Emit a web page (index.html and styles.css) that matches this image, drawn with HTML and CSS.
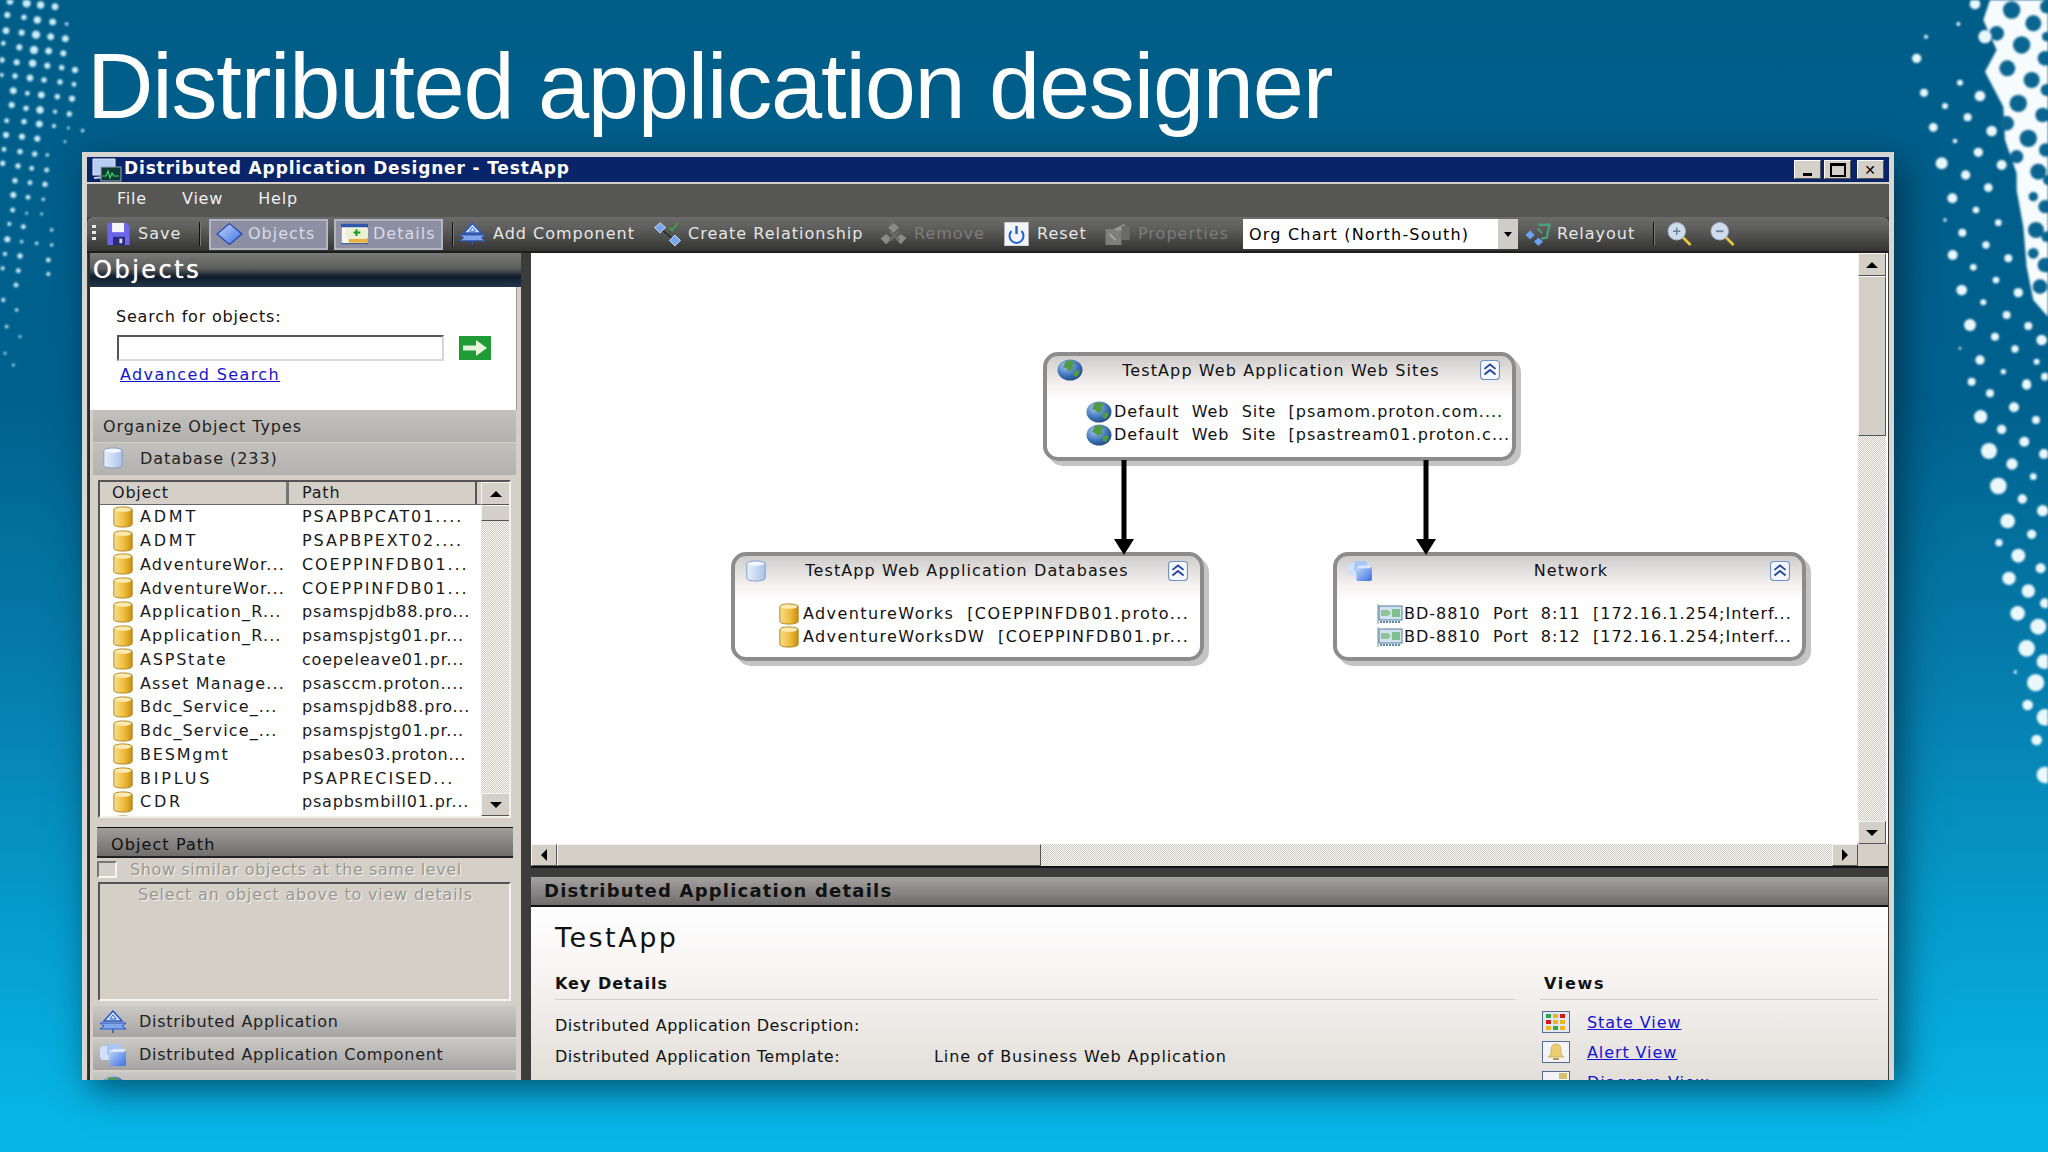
FILE: index.html
```html
<!DOCTYPE html>
<html lang="en">
<head>
    <meta charset="UTF-8">
    <meta name="viewport" content="width=device-width, initial-scale=1.0">
    <title>Distributed application designer</title>
    <link rel="stylesheet" href="styles.css">
</head>
<body>
    <svg class="icon-defs" width="0" height="0">
        <defs>
            <linearGradient id="gold" x1="0" x2="1" y1="0" y2="0"><stop offset="0" stop-color="#f7dc8c"/><stop offset=".55" stop-color="#f0bd3c"/><stop offset="1" stop-color="#c98f14"/></linearGradient>
            <linearGradient id="pale" x1="0" x2="1" y1="0" y2="0"><stop offset="0" stop-color="#e8f0fb"/><stop offset="1" stop-color="#a9c3ea"/></linearGradient>
            <linearGradient id="blue" x1="0" x2="1" y1="0" y2="1"><stop offset="0" stop-color="#c4dafa"/><stop offset="1" stop-color="#3b6fe0"/></linearGradient>
            <radialGradient id="earth" cx=".35" cy=".3" r=".8"><stop offset="0" stop-color="#a8c8ee"/><stop offset=".6" stop-color="#3c72b8"/><stop offset="1" stop-color="#1d4378"/></radialGradient>
            <symbol id="db" viewBox="0 0 22 24"><path d="M1 4c0-4 20-4 20 0v16c0 4-20 4-20 0z" fill="url(#gold)" stroke="#a8801c"/><ellipse cx="11" cy="4" rx="9" ry="2.4" fill="#fbeab0"/></symbol>
            <symbol id="db-pale" viewBox="0 0 22 24"><path d="M1 4c0-4 20-4 20 0v16c0 4-20 4-20 0z" fill="url(#pale)" stroke="#7f9cc8"/><ellipse cx="11" cy="4" rx="9" ry="2.2" fill="#f4f8fe"/></symbol>
            <symbol id="globe" viewBox="0 0 26 22"><ellipse cx="13" cy="11" rx="12.5" ry="10.5" fill="url(#earth)"/><path d="M9 2c4-1 8 0 9 2l-3 2 2 3-5 3-3-3-3-1zM16 13l5-2 2 2-3 5-3-1z" fill="#4f9b45"/></symbol>
            <symbol id="cubes" viewBox="0 0 28 24"><rect x="1" y="3" width="17" height="14" rx="4" fill="#cfe0fa"/><rect x="8" y="1" width="14" height="12" rx="3" fill="#a9c6f4"/><rect x="10" y="7" width="17" height="16" rx="2" fill="url(#blue)"/><path d="M10 9l4-3h13l-2 3z" fill="#dbe8fc"/></symbol>
            <symbol id="nic" viewBox="0 0 26 22"><path d="M1 1v20" stroke="#7c93ae" stroke-width="1"/><rect x="2" y="3" width="23" height="14" fill="#d2e2ee" stroke="#4d7ea0"/><path d="M4 7h7l3 3-3 3H4z" fill="#8fc49a"/><path d="M15 6h8v8h-8z" fill="#7fbf90"/><path d="M3 19h21" stroke="#5f88a8" stroke-width="2" stroke-dasharray="2 1"/></symbol>
            <symbol id="save" viewBox="0 0 26 26"><path d="M1 1h21l3 3v21H1z" fill="#6a68e8"/><rect x="6" y="1" width="13" height="10" fill="#f4f4fb"/><rect x="7" y="16" width="13" height="9" fill="#2d2a7c"/><rect x="14" y="18" width="3" height="5" fill="#d8d8ef"/></symbol>
            <symbol id="diamond" viewBox="0 0 26 22"><path d="M13 1l12 10-12 10L1 11z" fill="url(#blue)" stroke="#2747b0" stroke-width="1.2"/></symbol>
            <symbol id="details" viewBox="0 0 28 22"><rect x="0" y="1" width="28" height="20" fill="#f7f7f4" stroke="#274a90"/><rect x="0" y="1" width="28" height="3" fill="#2a55a8"/><rect x="5" y="5" width="23" height="10" fill="#e9f1d2"/><rect x="8" y="16" width="20" height="4" fill="#e8b23f"/><path d="M16 6v7M13 9.500h7" stroke="#0f9a1e" stroke-width="2"/></symbol>
            <symbol id="dist-app" viewBox="0 0 28 24"><path d="M14 1l9 10H5z" fill="#cfe2fb" stroke="#2b59c8" stroke-width="1.500"/><path d="M11 9h6l-3-4z" fill="#f2f7ff" stroke="#2b59c8"/><path d="M1 13h26l-4 3 4 3H1l4-3z" fill="#7fa8ec" stroke="#2b59c8"/><path d="M14 19v4" stroke="#2b59c8" stroke-width="1.500"/></symbol>
            <symbol id="relate" viewBox="0 0 28 26"><path d="M6 7l16 13" stroke="#222" stroke-width="1.500"/><path d="M6 1l6 5-6 6-6-6zM22 14l6 6-6 6-6-6z" fill="#78a8ec" stroke="#cfe0fa"/><path d="M16 6l3 3 6-8" fill="none" stroke="#3ea04a" stroke-width="2"/></symbol>
            <symbol id="remove" viewBox="0 0 28 26"><path d="M14 1l6 5-6 6-6-6zM6 13l6 5-6 6-6-6zM22 13l6 4-6 7-6-6z" fill="#8a8a88"/><path d="M10 10l10 10M20 10L10 20" stroke="#6a6a68" stroke-width="3"/></symbol>
            <symbol id="reset" viewBox="0 0 24 24"><rect x="0" y="0" width="24" height="24" fill="#f2f5fc" stroke="#b6b6b6"/><path d="M7 9a7 7 0 1 0 10 0" fill="none" stroke="#2060d0" stroke-width="2"/><path d="M12 4v8" stroke="#2060d0" stroke-width="2.400"/></symbol>
            <symbol id="props" viewBox="0 0 26 24"><path d="M1 7h16v16H1z" fill="#7e7e7c"/><path d="M9 7l11-5v6l-6 1z" fill="#9a9a98"/><path d="M17 4h8v14h-8z" fill="#6b6b69"/><path d="M5 12l6 6" stroke="#a4a4a2" stroke-width="2"/></symbol>
            <symbol id="relayout" viewBox="0 0 28 26"><path d="M6 9l5 5-5 5-5-5zM15 17l5 4-5 5-5-5z" fill="#6aa0ee"/><path d="M15 3h12l-3 14-6 1" fill="none" stroke="#4aa078" stroke-width="2.500"/><path d="M14 7l5 5" stroke="#4aa078" stroke-width="2"/></symbol>
            <symbol id="zoom-in" viewBox="0 0 28 26"><path d="M17 16l9 9" stroke="#e8c440" stroke-width="3"/><circle cx="11" cy="10" r="9.500" fill="#cfdcec" stroke="#9db0c8"/><path d="M11 6v8M7 10h8" stroke="#6a7c96" stroke-width="1.500"/></symbol>
            <symbol id="zoom-out" viewBox="0 0 28 26"><path d="M17 16l9 9" stroke="#e8c440" stroke-width="3"/><circle cx="11" cy="10" r="9.500" fill="#cfdcec" stroke="#9db0c8"/><path d="M7 10h8" stroke="#6a7c96" stroke-width="2"/></symbol>
            <symbol id="monitor" viewBox="0 0 30 24"><rect x="1" y="1" width="22" height="16" fill="#b7cdf2" stroke="#dfe8f8"/><path d="M2 20l24-2" stroke="#c8d0dc" stroke-width="2"/><rect x="9" y="9" width="20" height="14" fill="#0e3a36" stroke="#98a8b0"/><path d="M10 18h4l2-5 2 7 2-5 2 3h5" fill="none" stroke="#42d860" stroke-width="1.200"/></symbol>
            <symbol id="chevrons" viewBox="0 0 18 18"><rect x=".5" y=".5" width="17" height="17" rx="3" fill="#f4f8fd" stroke="#6f92c4"/><path d="M4 8l5-4 5 4M4 13l5-4 5 4" fill="none" stroke="#23449a" stroke-width="1.600"/></symbol>
            <symbol id="state" viewBox="0 0 28 22"><rect x=".5" y=".5" width="27" height="21" fill="#e2e8f4" stroke="#5a6a8a"/><g fill="#2fa64a"><rect x="4" y="3" width="5" height="4"/></g><rect x="11" y="3" width="5" height="4" fill="#e9b820"/><rect x="18" y="3" width="5" height="4" fill="#d81818"/><rect x="4" y="9" width="5" height="4" fill="#d81818"/><rect x="11" y="9" width="5" height="4" fill="#e9b820"/><rect x="18" y="9" width="5" height="4" fill="#e9b820"/><rect x="4" y="15" width="5" height="4" fill="#e9b820"/><rect x="11" y="15" width="5" height="4" fill="#2fa64a"/><rect x="18" y="15" width="5" height="4" fill="#e9b820"/></symbol>
            <symbol id="bell" viewBox="0 0 28 22"><rect x=".5" y=".5" width="27" height="21" fill="#f2f4fa" stroke="#5a6a8a"/><path d="M14 3c-5 0-5 4-5 8 0 3-2 4-3 5h16c-1-1-3-2-3-5 0-4 0-8-5-8z" fill="#eccf72" stroke="#b89a40" stroke-width=".6"/><rect x="11" y="17" width="6" height="2" fill="#b89a40"/></symbol>
            <symbol id="diagram" viewBox="0 0 28 22"><rect x=".5" y=".5" width="27" height="21" fill="#f2f4fa" stroke="#5a6a8a"/><rect x="17" y="2" width="8" height="6" fill="#d8c070"/></symbol>
        </defs>
    </svg>

    <!-- halftone dots of the slide template -->
    <svg class="halftone" viewBox="0 0 2048 1152" width="2048" height="1152">
        <g transform="scale(.3333)" fill="#cdeef8" stroke="#cdeef8" stroke-width="3">
            <circle cx="30" cy="4" r="9"/><circle cx="80" cy="10" r="11"/><circle cx="122" cy="15" r="10"/><circle cx="165" cy="20" r="9"/>
            <circle cx="22" cy="45" r="8"/><circle cx="72" cy="52" r="7"/><circle cx="112" cy="60" r="10"/><circle cx="158" cy="66" r="9"/><circle cx="200" cy="72" r="4"/>
            <circle cx="18" cy="92" r="9"/><circle cx="65" cy="98" r="8"/><circle cx="108" cy="104" r="11"/><circle cx="152" cy="110" r="9"/><circle cx="196" cy="116" r="9"/>
            <circle cx="10" cy="130" r="6"/><circle cx="58" cy="142" r="8"/><circle cx="102" cy="150" r="11"/><circle cx="146" cy="153" r="9"/><circle cx="190" cy="160" r="8"/>
            <circle cx="6" cy="180" r="7"/><circle cx="50" cy="187" r="8"/><circle cx="98" cy="190" r="10"/><circle cx="142" cy="197" r="8"/><circle cx="185" cy="203" r="7"/><circle cx="225" cy="210" r="8"/>
            <circle cx="5" cy="225" r="5"/><circle cx="45" cy="228" r="7"/><circle cx="90" cy="234" r="9"/><circle cx="132" cy="240" r="7"/><circle cx="180" cy="246" r="7"/><circle cx="222" cy="253" r="6"/>
            <circle cx="40" cy="272" r="9"/><circle cx="82" cy="280" r="6"/><circle cx="124" cy="285" r="9"/><circle cx="172" cy="290" r="7"/><circle cx="216" cy="296" r="8"/>
            <circle cx="35" cy="315" r="8"/><circle cx="78" cy="325" r="7"/><circle cx="120" cy="330" r="10"/><circle cx="165" cy="335" r="5"/><circle cx="208" cy="342" r="7"/>
            <circle cx="20" cy="362" r="6"/><circle cx="72" cy="365" r="7"/><circle cx="118" cy="372" r="9"/><circle cx="162" cy="378" r="5"/><circle cx="205" cy="384" r="3"/><circle cx="248" cy="392" r="4"/>
            <circle cx="18" cy="405" r="8"/><circle cx="66" cy="410" r="8"/><circle cx="112" cy="416" r="8"/><circle cx="195" cy="425" r="3"/>
            <circle cx="12" cy="448" r="6"/><circle cx="60" cy="455" r="7"/><circle cx="104" cy="462" r="7"/><circle cx="142" cy="465" r="4"/>
            <circle cx="8" cy="490" r="7"/><circle cx="54" cy="498" r="7"/><circle cx="95" cy="505" r="6"/><circle cx="140" cy="510" r="6"/>
            <circle cx="45" cy="542" r="7"/><circle cx="90" cy="548" r="6"/><circle cx="135" cy="553" r="7"/>
            <circle cx="40" cy="585" r="8"/><circle cx="84" cy="592" r="6"/><circle cx="130" cy="598" r="4"/>
            <circle cx="38" cy="630" r="6"/><circle cx="80" cy="640" r="3"/><circle cx="125" cy="642" r="3"/>
            <circle cx="28" cy="672" r="5"/><circle cx="70" cy="680" r="6"/><circle cx="155" cy="690" r="4"/>
            <circle cx="22" cy="718" r="8"/><circle cx="65" cy="725" r="4"/><circle cx="110" cy="730" r="4"/><circle cx="155" cy="735" r="4"/>
            <circle cx="15" cy="762" r="5"/><circle cx="60" cy="768" r="7"/><circle cx="145" cy="780" r="6"/>
            <circle cx="8" cy="805" r="5"/><circle cx="55" cy="812" r="6"/><circle cx="145" cy="822" r="5"/><circle cx="48" cy="855" r="6"/>
            <circle cx="10" cy="900" r="5"/><circle cx="50" cy="930" r="4"/><circle cx="20" cy="980" r="4"/><circle cx="60" cy="1010" r="3"/><circle cx="15" cy="1060" r="3"/><circle cx="40" cy="1095" r="3"/>
        </g>
        <g transform="translate(1800 0) scale(.3333)" fill="#eaf8fc">
            <path d="M570 0L550 60 590 150 555 215 610 320 615 420 650 520 650 570 670 680 680 800 700 900 744 950V0z" fill="#f6fbfd"/>
            <g fill="#0a6590">
                <circle cx="635" cy="30" r="26"/><circle cx="700" cy="70" r="24"/><circle cx="665" cy="135" r="26"/><circle cx="735" cy="175" r="22"/><circle cx="622" cy="205" r="24"/><circle cx="695" cy="240" r="24"/><circle cx="655" cy="310" r="26"/><circle cx="728" cy="345" r="22"/><circle cx="685" cy="415" r="26"/><circle cx="737" cy="450" r="20"/><circle cx="650" cy="470" r="20"/><circle cx="715" cy="515" r="24"/><circle cx="735" cy="620" r="20"/><circle cx="708" cy="690" r="24"/><circle cx="735" cy="795" r="22"/><circle cx="700" cy="590" r="14"/><circle cx="590" cy="100" r="22"/><circle cx="620" cy="370" r="22"/><circle cx="740" cy="20" r="20"/><circle cx="740" cy="110" r="14"/><circle cx="740" cy="270" r="18"/><circle cx="745" cy="540" r="16"/><circle cx="740" cy="710" r="16"/><circle cx="700" cy="760" r="16"/><circle cx="720" cy="860" r="22"/>
            </g>
            <circle cx="525" cy="12" r="16"/><circle cx="475" cy="72" r="6"/><circle cx="378" cy="110" r="6"/><circle cx="350" cy="175" r="14"/><circle cx="480" cy="248" r="9"/><circle cx="372" cy="278" r="12"/><circle cx="540" cy="288" r="16"/><circle cx="435" cy="318" r="9"/><circle cx="503" cy="352" r="12"/><circle cx="400" cy="382" r="13"/><circle cx="555" cy="110" r="20"/><circle cx="575" cy="393" r="16"/><circle cx="465" cy="423" r="7"/><circle cx="535" cy="457" r="14"/><circle cx="425" cy="490" r="18"/><circle cx="605" cy="495" r="15"/><circle cx="497" cy="525" r="14"/><circle cx="565" cy="563" r="13"/><circle cx="457" cy="595" r="15"/><circle cx="528" cy="630" r="10"/><circle cx="435" cy="660" r="5"/><circle cx="595" cy="668" r="10"/><circle cx="487" cy="698" r="12"/><circle cx="558" cy="735" r="11"/><circle cx="458" cy="765" r="15"/><circle cx="625" cy="775" r="12"/><circle cx="520" cy="802" r="10"/><circle cx="588" cy="840" r="10"/><circle cx="485" cy="870" r="16"/><circle cx="655" cy="878" r="14"/><circle cx="550" cy="907" r="9"/><circle cx="620" cy="945" r="12"/><circle cx="510" cy="975" r="18"/><circle cx="685" cy="978" r="12"/><circle cx="585" cy="1010" r="12"/><circle cx="480" cy="1045" r="4"/><circle cx="645" cy="1047" r="11"/><circle cx="710" cy="1085" r="9"/><circle cx="540" cy="1080" r="14"/><circle cx="610" cy="1115" r="8"/><circle cx="515" cy="1145" r="12"/><circle cx="680" cy="1150" r="12"/><circle cx="570" cy="1180" r="12"/><circle cx="725" cy="1020" r="16"/><circle cx="735" cy="1130" r="12"/>
        </g>
        <g transform="translate(1890 380) scale(.3333)" fill="#eaf8fc">
            <circle cx="372" cy="82" r="15"/><circle cx="410" cy="15" r="14"/><circle cx="272" cy="110" r="20"/><circle cx="335" cy="148" r="14"/><circle cx="403" cy="185" r="15"/><circle cx="438" cy="120" r="12"/><circle cx="297" cy="213" r="24"/><circle cx="366" cy="252" r="17"/><circle cx="462" cy="222" r="15"/><circle cx="430" cy="290" r="10"/><circle cx="325" cy="318" r="25"/><circle cx="397" cy="357" r="14"/><circle cx="458" cy="392" r="17"/><circle cx="353" cy="423" r="22"/><circle cx="425" cy="463" r="14"/><circle cx="327" cy="488" r="11"/><circle cx="385" cy="527" r="21"/><circle cx="452" cy="565" r="15"/><circle cx="357" cy="595" r="20"/><circle cx="415" cy="633" r="20"/><circle cx="465" cy="670" r="15"/><circle cx="383" cy="700" r="22"/><circle cx="445" cy="740" r="24"/><circle cx="410" cy="805" r="25"/><circle cx="462" cy="845" r="22"/><circle cx="376" cy="876" r="5"/><circle cx="437" cy="908" r="26"/><circle cx="413" cy="975" r="16"/><circle cx="465" cy="1012" r="25"/><circle cx="440" cy="1080" r="16"/><circle cx="465" cy="1185" r="25"/>
        </g>
    </svg>

    <div class="slide">
        <h1 class="slide-title">Distributed application designer</h1>

        <div class="window">
            <div class="titlebar">
                <svg class="ico ico-monitor"><use href="#monitor"/></svg>
                <span class="titlebar-text">Distributed Application Designer - TestApp</span>
                <div class="win-buttons">
                    <div class="win-btn"><span class="glyph-min"></span></div>
                    <div class="win-btn"><span class="glyph-max"></span></div>
                    <div class="win-btn win-close">✕</div>
                </div>
            </div>

            <div class="menubar">
                <span>File</span>
                <span>View</span>
                <span>Help</span>
            </div>

            <div class="toolbar">
                <div class="grip"></div>
                <div class="tool tool-save"><svg class="ico"><use href="#save"/></svg><span class="tool-text">Save</span></div>
                <div class="tool-sep"></div>
                <div class="tool tool-toggle tool-objects"><svg class="ico"><use href="#diamond"/></svg><span class="tool-text">Objects</span></div>
                <div class="tool tool-toggle tool-details"><svg class="ico"><use href="#details"/></svg><span class="tool-text">Details</span></div>
                <div class="tool-sep"></div>
                <div class="tool tool-add"><svg class="ico"><use href="#dist-app"/></svg><span class="tool-text">Add Component</span></div>
                <div class="tool tool-create"><svg class="ico"><use href="#relate"/></svg><span class="tool-text">Create Relationship</span></div>
                <div class="tool tool-off tool-remove"><svg class="ico"><use href="#remove"/></svg><span class="tool-text">Remove</span></div>
                <div class="tool tool-reset"><svg class="ico"><use href="#reset"/></svg><span class="tool-text">Reset</span></div>
                <div class="tool tool-off tool-props"><svg class="ico"><use href="#props"/></svg><span class="tool-text">Properties</span></div>
                <div class="combo">
                    <span class="combo-text">Org Chart (North-South)</span>
                    <span class="combo-btn"></span>
                </div>
                <div class="tool tool-relayout"><svg class="ico"><use href="#relayout"/></svg><span class="tool-text">Relayout</span></div>
                <div class="tool-sep tool-sep-last"></div>
                <div class="tool tool-zoom"><svg class="ico"><use href="#zoom-in"/></svg></div>
                <div class="tool tool-zoom"><svg class="ico"><use href="#zoom-out"/></svg></div>
            </div>

            <div class="main">
                <div class="left-panel">
                    <div class="objects-head">Objects</div>
                    <div class="search-box">
                        <div class="search-label">Search for objects:</div>
                        <div class="search-row">
                            <div class="search-input"></div>
                            <div class="go-btn">
                                <svg viewBox="0 0 32 24" width="32" height="24"><rect width="32" height="24" fill="#1f9c35"/><path d="M4 9.500h13V4l11 8-11 8v-5.500H4z" fill="#e4f4dc"/></svg>
                            </div>
                        </div>
                        <a class="link search-link">Advanced Search</a>
                    </div>

                    <div class="band band-flat">Organize Object Types</div>
                    <div class="band band-flat band-db"><svg class="ico"><use href="#db-pale"/></svg>Database (233)</div>

                    <div class="object-list">
                        <div class="list-body">
                            <div class="list-head">
                                <div class="col-object">Object</div>
                                <div class="col-path">Path</div>
                            </div>
                            <div class="list-row"><svg class="ico"><use href="#db"/></svg><span class="cell-name wide">ADMT</span><span class="cell-path caps">PSAPBPCAT01....</span></div>
                            <div class="list-row"><svg class="ico"><use href="#db"/></svg><span class="cell-name wide">ADMT</span><span class="cell-path caps">PSAPBPEXT02....</span></div>
                            <div class="list-row"><svg class="ico"><use href="#db"/></svg><span class="cell-name">AdventureWor...</span><span class="cell-path caps">COEPPINFDB01...</span></div>
                            <div class="list-row"><svg class="ico"><use href="#db"/></svg><span class="cell-name">AdventureWor...</span><span class="cell-path caps">COEPPINFDB01...</span></div>
                            <div class="list-row"><svg class="ico"><use href="#db"/></svg><span class="cell-name">Application_R...</span><span class="cell-path">psamspjdb88.pro...</span></div>
                            <div class="list-row"><svg class="ico"><use href="#db"/></svg><span class="cell-name">Application_R...</span><span class="cell-path">psamspjstg01.pr...</span></div>
                            <div class="list-row"><svg class="ico"><use href="#db"/></svg><span class="cell-name caps">ASPState</span><span class="cell-path">coepeleave01.pr...</span></div>
                            <div class="list-row"><svg class="ico"><use href="#db"/></svg><span class="cell-name">Asset Manage...</span><span class="cell-path">psasccm.proton....</span></div>
                            <div class="list-row"><svg class="ico"><use href="#db"/></svg><span class="cell-name">Bdc_Service_...</span><span class="cell-path">psamspjdb88.pro...</span></div>
                            <div class="list-row"><svg class="ico"><use href="#db"/></svg><span class="cell-name">Bdc_Service_...</span><span class="cell-path">psamspjstg01.pr...</span></div>
                            <div class="list-row"><svg class="ico"><use href="#db"/></svg><span class="cell-name caps">BESMgmt</span><span class="cell-path">psabes03.proton...</span></div>
                            <div class="list-row"><svg class="ico"><use href="#db"/></svg><span class="cell-name wide">BIPLUS</span><span class="cell-path caps">PSAPRECISED...</span></div>
                            <div class="list-row"><svg class="ico"><use href="#db"/></svg><span class="cell-name wide">CDR</span><span class="cell-path">psapbsmbill01.pr...</span></div>
                            <div class="list-row"><svg class="ico"><use href="#db"/></svg></div>
                        </div>
                        <div class="vscroll vscroll-list">
                            <div class="sb-btn"><span class="arrow-up"></span></div>
                            <div class="sb-thumb"></div>
                            <div class="sb-track"></div>
                            <div class="sb-btn"><span class="arrow-down"></span></div>
                        </div>
                    </div>

                    <div class="path-head">Object Path</div>
                    <div class="similar-row"><span class="checkbox"></span>Show similar objects at the same level</div>
                    <div class="path-box">Select an object above to view details</div>

                    <div class="band band-nav"><svg class="ico"><use href="#dist-app"/></svg>Distributed Application</div>
                    <div class="band band-nav"><svg class="ico"><use href="#cubes"/></svg>Distributed Application Component</div>
                    <div class="band band-nav"><svg class="ico"><use href="#globe"/></svg>Logical Objects</div>
                </div>

                <div class="right-panel">
                    <div class="canvas-frame">
                        <div class="canvas">
                            <div class="node node-sites">
                                <div class="node-head">
                                    <svg class="ico"><use href="#globe"/></svg>
                                    <span class="node-title">TestApp Web Application Web Sites</span>
                                    <svg class="ico ico-chev"><use href="#chevrons"/></svg>
                                </div>
                                <div class="node-items">
                                    <div class="node-item"><svg class="ico"><use href="#globe"/></svg>Default&nbsp; Web&nbsp; Site&nbsp; [psamom.proton.com....</div>
                                    <div class="node-item"><svg class="ico"><use href="#globe"/></svg>Default&nbsp; Web&nbsp; Site&nbsp; [psastream01.proton.c...</div>
                                </div>
                            </div>

                            <div class="node node-dbs">
                                <div class="node-head">
                                    <svg class="ico ico-small"><use href="#db-pale"/></svg>
                                    <span class="node-title">TestApp Web Application Databases</span>
                                    <svg class="ico ico-chev"><use href="#chevrons"/></svg>
                                </div>
                                <div class="node-items">
                                    <div class="node-item"><svg class="ico ico-small"><use href="#db"/></svg>AdventureWorks&nbsp; [COEPPINFDB01.proto...</div>
                                    <div class="node-item"><svg class="ico ico-small"><use href="#db"/></svg>AdventureWorksDW&nbsp; [COEPPINFDB01.pr...</div>
                                </div>
                            </div>

                            <div class="node node-net">
                                <div class="node-head">
                                    <svg class="ico"><use href="#cubes"/></svg>
                                    <span class="node-title">Network</span>
                                    <svg class="ico ico-chev"><use href="#chevrons"/></svg>
                                </div>
                                <div class="node-items">
                                    <div class="node-item"><svg class="ico"><use href="#nic"/></svg>BD-8810&nbsp; Port&nbsp; 8:11&nbsp; [172.16.1.254;Interf...</div>
                                    <div class="node-item"><svg class="ico"><use href="#nic"/></svg>BD-8810&nbsp; Port&nbsp; 8:12&nbsp; [172.16.1.254;Interf...</div>
                                </div>
                            </div>

                            <svg class="arrows" width="1330" height="600">
                                <path d="M593 207v85M895 207v85" stroke="#000" stroke-width="5"/>
                                <path d="M583 286h20l-10 16zM885 286h20l-10 16z" fill="#000"/>
                            </svg>
                        </div>
                        <div class="vscroll vscroll-canvas">
                            <div class="sb-btn"><span class="arrow-up"></span></div>
                            <div class="sb-thumb"></div>
                            <div class="sb-track"></div>
                            <div class="sb-btn"><span class="arrow-down"></span></div>
                        </div>
                        <div class="hscroll">
                            <div class="sb-btn"><span class="arrow-left"></span></div>
                            <div class="sb-thumb"></div>
                            <div class="sb-track"></div>
                            <div class="sb-btn"><span class="arrow-right"></span></div>
                        </div>
                        <div class="sb-corner"></div>
                    </div>

                    <div class="details-head">Distributed Application details</div>
                    <div class="details">
                        <h2 class="details-name">TestApp</h2>
                        <div class="details-cols">
                            <div class="key-details">
                                <div class="section-title">Key Details</div>
                                <div class="kv"><span class="kv-label">Distributed Application Description:</span></div>
                                <div class="kv"><span class="kv-label">Distributed Application Template:</span><span class="kv-value">Line of Business Web Application</span></div>
                                <div class="kv"><span class="kv-label">Component Groups:</span><span class="kv-value">3</span></div>
                            </div>
                            <div class="views">
                                <div class="section-title">Views</div>
                                <div class="view-row"><svg class="ico"><use href="#state"/></svg><a class="link">State View</a></div>
                                <div class="view-row"><svg class="ico"><use href="#bell"/></svg><a class="link">Alert View</a></div>
                                <div class="view-row"><svg class="ico"><use href="#diagram"/></svg><a class="link">Diagram View</a></div>
                            </div>
                        </div>
                    </div>
                </div>
            </div>
        </div>
    </div>
</body>
</html>
```

FILE: styles.css
```css
html, body {
    height: 100%;
    margin: 0;
}

body {
    width: 2048px;
    height: 1152px;
    overflow: hidden;
    position: relative;
    background: linear-gradient(180deg, #005d88 0%, #00618e 35%, #067fae 60%, #059ccd 80%, #07b5e6 97%);
    font-family: "DejaVu Sans", sans-serif;
    font-size: 16px;
    letter-spacing: 0.8px;
}

.icon-defs {
    position: absolute;
}

.halftone {
    position: absolute;
    top: 0;
    left: 0;
    filter: blur(0.8px);
}

.slide {
    position: relative;
    padding-left: 82px;
}

.slide-title {
    margin: 0;
    height: 152px;
    padding: 33px 0 0 5px;
    box-sizing: border-box;
    font-family: "Liberation Sans", Arial, sans-serif;
    font-size: 92px;
    font-weight: normal;
    line-height: 106px;
    letter-spacing: -1.2px;
    color: #fff;
}

.ico {
    display: block;
    flex: none;
}

/* window */
.window {
    width: 1812px;
    height: 928px;
    box-sizing: border-box;
    border: 5px solid #d6d6d2;
    border-bottom: 0;
    background: #3c3c3a;
    display: flex;
    flex-direction: column;
    overflow: hidden;
    box-shadow: 8px 10px 34px rgba(0, 30, 50, 0.65);
}

.titlebar {
    height: 25px;
    flex: none;
    background: #0a246a;
    border-bottom: 2px solid #d4d0c8;
    display: flex;
    align-items: center;
    color: #fff;
    padding-left: 5px;
}

.ico-monitor {
    width: 30px;
    height: 24px;
}

.titlebar-text {
    margin: -4px 0 0 2px;
    font-size: 17px;
    font-weight: bold;
    letter-spacing: 0.85px;
}

.win-buttons {
    margin-left: auto;
    display: flex;
    gap: 3px;
    padding-right: 5px;
}

.win-btn {
    width: 27px;
    height: 19px;
    background: #d4d0c8;
    border: 1px solid #fff;
    border-right-color: #555;
    border-bottom-color: #555;
    box-sizing: border-box;
    display: flex;
    align-items: center;
    justify-content: center;
    color: #000;
    position: relative;
}

.win-close {
    margin-left: 3px;
    font-size: 14px;
    font-weight: bold;
}

.glyph-min {
    width: 9px;
    height: 3px;
    background: #000;
    margin-top: 10px;
}

.glyph-max {
    width: 12px;
    height: 9px;
    border: 2px solid #000;
    border-top-width: 3px;
}

.menubar {
    height: 33px;
    flex: none;
    background: #565654;
    display: flex;
    align-items: center;
    padding: 0 0 5px 30px;
    box-sizing: border-box;
    gap: 35px;
    color: #efefef;
}

.toolbar {
    height: 34px;
    flex: none;
    background: linear-gradient(180deg, #6c6c6a 0%, #5a5a58 40%, #343432 100%);
    border-radius: 6px 6px 0 0;
    border-bottom: 2px solid #1e1e1e;
    display: flex;
    align-items: center;
    color: #e6e6e6;
    letter-spacing: 1px;
}

.grip {
    width: 4px;
    height: 18px;
    margin-left: 5px;
    background: repeating-linear-gradient(180deg, #e8e8e8 0 3px, transparent 3px 6px);
}

.tool {
    display: flex;
    align-items: center;
    gap: 7px;
    box-sizing: border-box;
    height: 31px;
    white-space: nowrap;
}

.tool .ico {
    width: 27px;
    height: 24px;
}

.tool-text {
    margin-top: -2px;
}

.tool-save { width: 84px; margin-left: 9px; gap: 6px; margin-right: 1px; }
.tool-add { width: 195px; }
.tool-create { width: 226px; }
.tool-remove { width: 123px; }
.tool-reset { width: 101px; }
.tool-props { width: 139px; }
.tool-relayout { width: 120px; margin-left: 6px; gap: 6px; }
.tool-zoom { width: 43px; }

.tool-sep {
    width: 2px;
    height: 24px;
    background: #111;
    margin: 0 5px 0 9px;
    border-right: 1px solid #777;
    box-sizing: border-box;
}

.tool-sep-last {
    margin-right: 11px;
}

.tool-toggle {
    background: #8d90a2;
    border: 2px solid #b3b5c2;
    color: #d9dbe6;
    padding-left: 5px;
    margin-right: 6px;
    gap: 5px;
}

.tool-objects { width: 119px; margin-left: 3px; }
.tool-details { width: 109px; margin-right: 0; }

.tool-off {
    color: #7c7c7a;
}

.combo {
    width: 275px;
    height: 30px;
    background: #fff;
    color: #000;
    display: flex;
    align-items: center;
    padding-left: 6px;
    box-sizing: border-box;
    letter-spacing: 1.2px;
}

.combo-text {
    flex: 1;
}

.combo-btn {
    width: 20px;
    height: 30px;
    background: #cfcdc8;
    position: relative;
}

.combo-btn::after {
    content: "";
    position: absolute;
    top: 13px;
    left: 6px;
    border: 4px solid transparent;
    border-top: 5px solid #000;
    border-bottom: 0;
}

/* main split */
.main {
    flex: 1;
    min-height: 0;
    display: flex;
    color: #1a1a1a;
}

.left-panel {
    width: 433px;
    margin-left: 1px;
    flex: none;
    box-sizing: border-box;
    border-left: 2px solid #2c2c2c;
    background: #d4d0c8;
    display: flex;
    flex-direction: column;
}

.objects-head {
    height: 34px;
    flex: none;
    background: linear-gradient(180deg, #7a7a78 0%, #5d5d5b 45%, #0e1c2c 70%, #24364a 100%);
    color: #fff;
    font-size: 24px;
    line-height: 34px;
    padding-left: 3px;
    letter-spacing: 2.5px;
    text-shadow: 0 0 1px #fff;
}

.search-box {
    height: 123px;
    flex: none;
    box-sizing: border-box;
    background: #fff;
    margin-right: 4px;
    padding: 20px 0 0 26px;
    color: #111;
    border-right: 1px solid #999;
}

.search-label {
    line-height: 20px;
}

.search-row {
    display: flex;
    align-items: center;
    gap: 15px;
    margin-top: 8px;
}

.search-input {
    width: 327px;
    height: 26px;
    box-sizing: border-box;
    border: 2px solid #d8d6d2;
    border-top-color: #555;
    border-left-color: #555;
    background: #fff;
    margin-left: 1px;
}

.go-btn {
    height: 24px;
}

.link {
    color: #1414d2;
    text-decoration: underline;
}

.search-link {
    display: block;
    margin: 4px 0 0 4px;
    letter-spacing: 1.4px;
}

.band {
    flex: none;
    display: flex;
    align-items: center;
    margin: 0 5px 1px 3px;
    box-sizing: border-box;
    color: #222;
}

.band-flat {
    height: 32px;
    background: linear-gradient(180deg, #c3c1bd, #b4b2ae);
    padding-left: 10px;
    letter-spacing: 0.95px;
}

.band-db {
    gap: 16px;
    padding-left: 9px;
    padding-bottom: 2px;
}

.band-db .ico {
    width: 22px;
    height: 22px;
}

.object-list {
    height: 338px;
    flex: none;
    box-sizing: border-box;
    margin: 4px 10px 9px 8px;
    border: 2px solid #555;
    border-right-color: #f2f2ee;
    border-bottom-color: #f2f2ee;
    display: flex;
    overflow: hidden;
}

.list-body {
    width: 381px;
    flex: none;
    background: #fff;
    overflow: hidden;
}

.list-head {
    height: 22px;
    display: flex;
    background: #d4d0c8;
    border-bottom: 1px solid #666;
    line-height: 22px;
}

.col-object {
    width: 189px;
    padding-left: 12px;
    box-sizing: border-box;
    border-right: 3px solid #777;
}

.col-path {
    width: 188px;
    padding-left: 13px;
    box-sizing: border-box;
    border-right: 2px solid #555;
}

.list-row {
    height: 23.750px;
    display: flex;
    align-items: center;
    padding-left: 12px;
    white-space: nowrap;
}

.list-row .ico {
    width: 22px;
    height: 22px;
}

.cell-name {
    width: 168px;
    padding-left: 6px;
    box-sizing: border-box;
    letter-spacing: 1.15px;
}

.cell-name.caps { letter-spacing: 1.8px; }
.cell-name.wide { letter-spacing: 2.8px; }
.cell-path.caps { letter-spacing: 1.9px; }

.vscroll {
    display: flex;
    flex-direction: column;
    flex: none;
}

.vscroll-list {
    width: 29px;
}

.sb-btn {
    flex: none;
    background: #d4d0c8;
    border: 1px solid #f4f4f0;
    border-right-color: #555;
    border-bottom-color: #555;
    box-sizing: border-box;
    display: flex;
    align-items: center;
    justify-content: center;
}

.vscroll .sb-btn {
    height: 23px;
}

.sb-thumb {
    flex: none;
    background: #d4d0c8;
    border: 1px solid #f4f4f0;
    border-right-color: #555;
    border-bottom-color: #555;
    box-sizing: border-box;
}

.sb-track {
    flex: 1;
    background: repeating-conic-gradient(#cfcbc3 0 25%, #f6f6f4 0 50%) 0 0 / 2px 2px;
}

.vscroll-list .sb-thumb {
    height: 16px;
}

.vscroll-canvas .sb-thumb {
    height: 160px;
}

.arrow-up, .arrow-down, .arrow-left, .arrow-right {
    display: block;
    width: 0;
    height: 0;
    border: 6px solid transparent;
}

.arrow-up { border-bottom: 6px solid #000; border-top: 0; }
.arrow-down { border-top: 6px solid #000; border-bottom: 0; }
.arrow-left { border-right: 6px solid #000; border-left: 0; }
.arrow-right { border-left: 6px solid #000; border-right: 0; }

.path-head {
    height: 31px;
    flex: none;
    margin: 0 8px 0 7px;
    box-sizing: border-box;
    padding-left: 14px;
    line-height: 33px;
    background: linear-gradient(180deg, #9e9d9a 0%, #6f6e6c 100%);
    border-top: 1px solid #111;
    border-bottom: 2px solid #222;
    color: #111;
    letter-spacing: 1.1px;
}

.similar-row {
    height: 24px;
    flex: none;
    margin-left: 7px;
    padding-bottom: 2px;
    box-sizing: border-box;
    display: flex;
    align-items: center;
    gap: 13px;
    color: #99978f;
    text-shadow: 1px 1px 0 #f4f4f0;
    letter-spacing: 0.6px;
}

.checkbox {
    width: 20px;
    height: 17px;
    box-sizing: border-box;
    border: 2px solid #f4f4f0;
    border-top-color: #777;
    border-left-color: #777;
}

.path-box {
    height: 119px;
    flex: none;
    box-sizing: border-box;
    margin: 0 10px 5px 8px;
    border: 2px solid #f4f4f0;
    border-top-color: #555;
    border-left-color: #555;
    padding: 1px 0 0 38px;
    color: #99978f;
    text-shadow: 1px 1px 0 #f4f4f0;
}

.band-nav {
    height: 31px;
    background: linear-gradient(180deg, #cbc9c5 0%, #a5a4a3 100%);
    padding-left: 5px;
    gap: 11px;
    margin-bottom: 2px;
    letter-spacing: 0.7px;
}

.band-nav .ico {
    width: 30px;
    height: 24px;
}

.right-panel {
    flex: 1;
    min-width: 0;
    margin-left: 10px;
    display: flex;
    flex-direction: column;
    background: #3c3c3a;
}

.canvas-frame {
    height: 613px;
    flex: none;
    display: grid;
    grid-template-columns: 1fr 30px;
    grid-template-rows: 1fr 22px;
    background: #fff;
    margin-right: 1px;
    border-bottom: 2px solid #111;
}

.canvas {
    position: relative;
    background: #fff;
    overflow: hidden;
}

.arrows {
    position: absolute;
    top: 0;
    left: 0;
}

.node {
    position: absolute;
    width: 473px;
    height: 109px;
    box-sizing: border-box;
    border: 4px solid #8c8c8c;
    border-radius: 15px;
    background: linear-gradient(180deg, #cfcdcc 0%, #f6f3f2 30%, #fff 45%);
    box-shadow: 5px 5px 0 #c4c4c4;
    color: #111;
    letter-spacing: 1px;
}

.node-sites { left: 512px; top: 99px; }
.node-dbs { left: 200px; top: 299px; letter-spacing: 1.4px; }
.node-net { left: 802px; top: 299px; }

.node-head {
    height: 28px;
    display: flex;
    align-items: center;
    padding: 0 11px 0 10px;
}

.node-dbs .node-head,
.node-net .node-head {
    height: 29px;
}

.node-head .ico {
    width: 26px;
    height: 22px;
}

.node-head .ico-chev {
    width: 22px;
    height: 20px;
}

.node-title {
    flex: 1;
    text-align: center;
    letter-spacing: 1.1px;
}

.node-items {
    padding: 16px 0 0 39px;
}

.node-item {
    height: 23px;
    display: flex;
    align-items: center;
    gap: 2px;
    white-space: nowrap;
}

.node-item .ico {
    width: 26px;
    height: 22px;
}

.node .ico-small {
    width: 22px;
    height: 22px;
}

.node-dbs .node-items {
    padding-left: 43px;
}

.node-dbs .node-item {
    gap: 3px;
}

.node-net .node-items {
    padding-top: 17px;
}

.node-dbs .node-items {
    padding-top: 17px;
}

.node-net .node-item {
    gap: 0;
}

.node-net .node-item .ico {
    width: 28px;
}

.vscroll-canvas {
    grid-column: 2;
    grid-row: 1;
    padding-right: 2px;
}

.hscroll {
    grid-column: 1;
    grid-row: 2;
    display: flex;
}

.hscroll .sb-btn {
    width: 26px;
}

.hscroll .sb-thumb {
    width: 484px;
}

.sb-corner {
    background: #d4d0c8;
}

.details-head {
    height: 30px;
    flex: none;
    margin-top: 9px;
    margin-right: 1px;
    box-sizing: border-box;
    padding-left: 13px;
    line-height: 27px;
    background: linear-gradient(180deg, #a4a3a1 0%, #6e6d6b 100%);
    border-bottom: 2px solid #111;
    font-weight: bold;
    font-size: 18px;
    letter-spacing: 1.2px;
    color: #111;
}

.details {
    flex: 1;
    min-height: 0;
    margin-right: 1px;
    padding: 15px 10px 0 24px;
    background: linear-gradient(180deg, #fff 0%, #f6f3f2 40%, #e2dfda 100%);
    overflow: hidden;
}

.details-name {
    margin: 0;
    font-family: "DejaVu Sans", sans-serif;
    font-size: 27px;
    font-weight: normal;
    line-height: 32px;
    letter-spacing: 2.5px;
    color: #111;
}

.details-cols {
    display: flex;
    margin-top: 18px;
    gap: 25px;
}

.key-details {
    width: 960px;
    flex: none;
}

.views {
    flex: 1;
}

.section-title {
    height: 27px;
    line-height: 24px;
    font-weight: bold;
    color: #111;
    border-bottom: 1px solid #d2d0cc;
    margin-bottom: 10px;
    letter-spacing: 1px;
}

.views .section-title {
    padding-left: 4px;
    letter-spacing: 1.7px;
    margin-bottom: 7px;
}

.kv {
    height: 31px;
    display: flex;
    align-items: center;
    color: #111;
    letter-spacing: 0.55px;
}

.kv-label {
    width: 379px;
    flex: none;
}

.kv-value {
    letter-spacing: 0.9px;
}

.view-row {
    height: 30px;
    display: flex;
    align-items: center;
    gap: 17px;
    padding-left: 2px;
    letter-spacing: 0.9px;
}

.view-row .ico {
    width: 28px;
    height: 22px;
}
```
